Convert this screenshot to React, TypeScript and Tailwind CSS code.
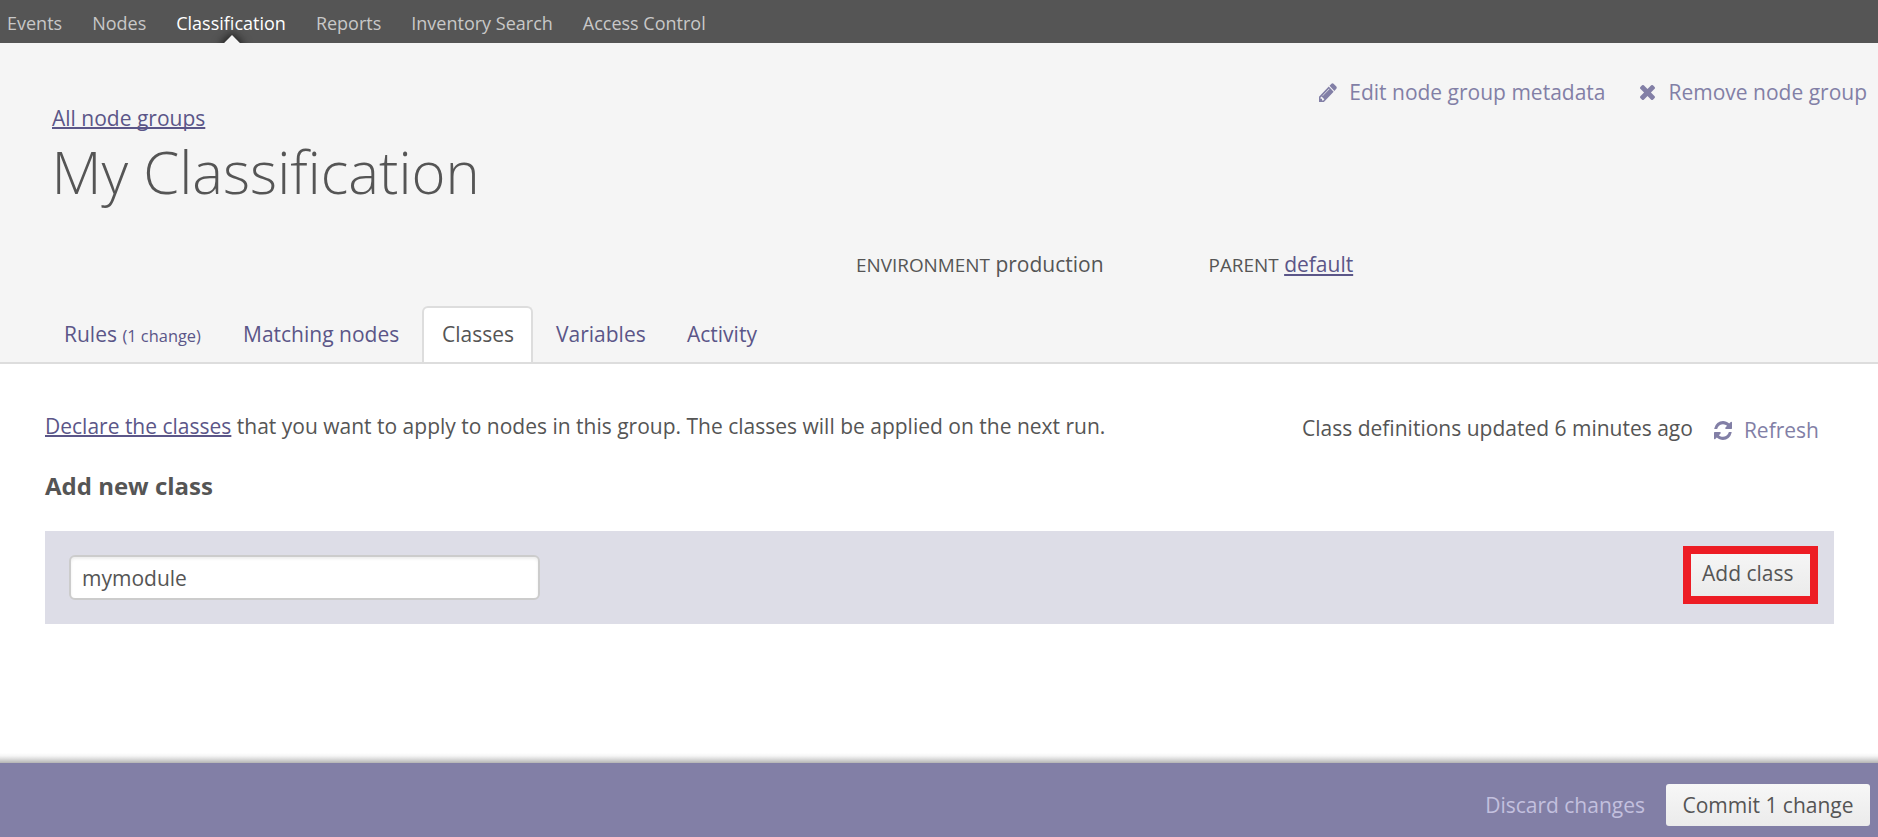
import React from "react";

const navItems = ["Events", "Nodes", "Classification", "Reports", "Inventory Search", "Access Control"];

function PencilIcon() {
  return (
    <svg className="mr-[12px] h-[19px] w-[18px]" viewBox="0 0 1536 1536" fill="currentColor" preserveAspectRatio="none">
      <path d="M363 1408l91-91-235-235-91 91v107h128v128h107zM886 480q0-22-22-22-10 0-17 7l-542 542q-7 7-7 17 0 22 22 22 10 0 17-7l542-542q7-7 7-17zM832 288l416 416-832 832H0v-416zM1515 384q0 53-37 90l-166 166-416-416 166-165q36-38 90-38 53 0 91 38l235 234q37 39 37 91z" />
    </svg>
  );
}

function CrossIcon() {
  return (
    <svg className="mr-[13px] h-[15px] w-[15px]" viewBox="0 0 1188 1188" fill="currentColor">
      <path d="M1188 956q0 40-28 68l-136 136q-28 28-68 28t-68-28L594 866l-294 294q-28 28-68 28t-68-28L28 1024Q0 996 0 956t28-68l294-294L28 300Q0 272 0 232t28-68L164 28Q192 0 232 0t68 28l294 294L888 28q28-28 68-28t68 28l136 136q28 28 28 68t-28 68L866 594l294 294q28 28 28 68z" />
    </svg>
  );
}

function RefreshIcon() {
  return (
    <svg className="mr-[12px] h-[19px] w-[18px]" viewBox="0 0 1536 1536" fill="currentColor" preserveAspectRatio="none">
      <path d="M1511 928q0 5-1 7-64 268-268 434.500T764 1536q-146 0-282.500-55T238 1324l-129 129q-19 19-45 19t-45-19-19-45V960q0-26 19-45t45-19h448q26 0 45 19t19 45-19 45l-137 137q71 66 161 102t187 36q134 0 250-65t186-179q11-17 53-117 8-23 30-23h192q13 0 22.500 9.500t9.500 22.500zM1536 128v448q0 26-19 45t-45 19h-448q-26 0-45-19t-19-45 19-45l138-138Q969 256 768 256q-134 0-250 65T332 500q-11 17-53 117-8 23-30 23H50q-13 0-22.500-9.500T18 608v-7q65-268 270-434.500T768 0q146 0 284 55.500T1297 212l130-129q19-19 45-19t45 19 19 45z" />
    </svg>
  );
}

export default function App() {
  return (
    <div className="flex h-[837px] w-[1878px] flex-col overflow-hidden bg-white font-['Open_Sans',sans-serif] text-[21px] leading-[30px] text-[#555]">
      <nav className="flex h-[43px] shrink-0 gap-[30px] overflow-hidden bg-[#555] pl-[7px] text-[18px] leading-[47px] text-[#c8c8c8]">
        {navItems.map((item) =>
          item === "Classification" ? (
            <a key={item} className="relative whitespace-nowrap text-white">
              {item}
              <span className="absolute top-[38px] left-[49px] h-[14px] w-[14px] rotate-45 bg-[#f5f5f5] shadow-[0_0_9px_2px_#222]" />
            </a>
          ) : (
            <a key={item} className="whitespace-nowrap">{item}</a>
          ),
        )}
      </nav>

      <header className="flex h-[321px] shrink-0 flex-col border-b-2 border-[#ddd] bg-[#f5f5f5]">
        <div className="flex h-[203px] justify-between">
          <div className="pt-[60px] pl-[52px]">
            <a className="block text-[#5b5688] underline decoration-2 underline-offset-1 [text-decoration-skip-ink:none]">All node groups</a>
            <h1 className="mt-[1px] ml-[-0.5px] text-[58px] leading-[75px] font-light whitespace-nowrap">My Classification</h1>
          </div>
          <div className="flex h-[30px] gap-[35px] pt-[34px] pr-[11px] whitespace-nowrap text-[#827fa6]">
            <a className="flex h-[30px] items-center"><PencilIcon />Edit node group metadata</a>
            <a className="flex h-[30px] items-center"><CrossIcon />Remove node group</a>
          </div>
        </div>
        <div className="flex h-[60px] gap-[105px] pt-[3px] pl-[856px] whitespace-nowrap">
          <div><span className="text-[18.9px]">ENVIRONMENT</span> production</div>
          <div><span className="text-[18.9px]">PARENT</span> <a className="text-[#5b5688] underline decoration-2 underline-offset-2">default</a></div>
        </div>
        <div className="flex h-[56px] pl-[43px] leading-[57px] whitespace-nowrap text-[#5b5688]">
          <a className="w-[179px] pl-[21px]">Rules <span className="text-[16.4px]">(1 change)</span></a>
          <a className="w-[200px] pl-[21px]">Matching nodes</a>
          <a className="h-[56px] w-[111px] rounded-t-[6px] border-2 border-b-0 border-[#ddd] bg-white pl-[18px] leading-[53px] text-[#555]">Classes</a>
          <a className="w-[132px] pl-[23px]">Variables</a>
          <a className="pl-[22px]">Activity</a>
        </div>
      </header>

      <main className="flex h-[399px] shrink-0 flex-col">
        <div className="flex justify-between pt-[47px] pr-[59px] pl-[45px] whitespace-nowrap">
          <p><a className="text-[#5b5688] underline decoration-2 underline-offset-1">Declare the classes</a> that you want to apply to nodes in this group. The classes will be applied on the next run.</p>
          <div className="flex pt-[2px]">
            <span>Class definitions updated 6 minutes ago</span>
            <a className="mt-[2px] ml-[21px] flex items-center text-[#827fa6]"><RefreshIcon />Refresh</a>
          </div>
        </div>
        <h2 className="mt-[26px] ml-[45px] text-[24px] leading-[30px] font-bold">Add new class</h2>
        <div className="mt-[30px] mr-[44px] ml-[45px] flex h-[93px] shrink-0 justify-between bg-[#dddde7] pr-[16px] pl-[24px]">
          <input
            readOnly
            value="mymodule"
            className="mt-[24px] h-[45px] w-[471px] rounded-[6px] border-2 border-[#ccc] bg-white px-[11px] shadow-[inset_0_2px_3px_#00000013] outline-none"
          />
          <button className="mt-[15px] h-[58px] w-[135px] border-8 border-[#ed1c24] bg-linear-to-b from-[#f5f5f5] to-[#ebebeb] pb-[4px] pl-[11px] text-left leading-[38px] whitespace-nowrap">Add class</button>
        </div>
        <div className="mt-auto h-[10px] bg-[linear-gradient(to_top,#b4b4b4,#dcdcdc_40%,#f5f5f5_70%,#fff)]" />
      </main>

      <footer className="flex h-[74px] shrink-0 justify-end bg-[#827fa6] pt-[21px] pr-[8px]">
        <a className="mr-[21px] leading-[42px] text-[#c3c0de]">Discard changes</a>
        <button className="h-[42px] w-[204px] rounded-[3px] bg-linear-to-b from-[#f7f7f7] to-[#ebebeb] text-center leading-[42px] whitespace-nowrap">Commit 1 change</button>
      </footer>
    </div>
  );
}
